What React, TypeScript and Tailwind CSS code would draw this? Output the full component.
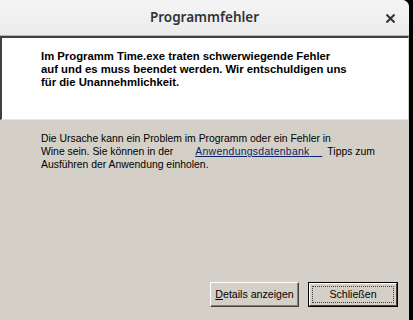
import React from "react";

export default function App() {
  const tahoma = { fontFamily: '"Liberation Sans", Arial, sans-serif' };
  return (
    <div className="w-[413px] h-[320px] bg-black overflow-hidden flex">
      <div className="w-[409px] h-[320px] flex flex-col bg-[#d4d0c8] rounded-tr-[7px] overflow-hidden">
        {/* Title bar */}
        <div className="h-[36px] shrink-0 relative flex items-center justify-center bg-gradient-to-b from-[#f4f4f4] to-[#ececec] border-b border-[#b8b6b2]">
          <span
            className="text-[13.5px] font-semibold text-[#2e3436] leading-none"
            style={{ fontFamily: '"Noto Sans", "Open Sans", sans-serif' }}
          >
            Programmfehler
          </span>
          <svg
            className="absolute right-[14px] top-[14px]"
            width="9"
            height="9"
            viewBox="0 0 9 9"
          >
            <path d="M1.2 1.2 L7.8 7.8 M7.8 1.2 L1.2 7.8" stroke="#2e3436" strokeWidth="2" strokeLinecap="square" />
          </svg>
        </div>

        {/* White message panel */}
        <div className="h-[84px] shrink-0 bg-white border-t-2 border-l-2 border-t-[#404040] border-l-[#404040] border-r border-b border-r-[#d4d0c8] border-b-[#e8e6e2] pl-[39px] pt-[12px]">
          <div className="text-[11.3px] font-bold leading-[13px] text-black" style={tahoma}>
            <div>Im Programm Time.exe traten schwerwiegende Fehler</div>
            <div>auf und es muss beendet werden. Wir entschuldigen uns</div>
            <div>für die Unannehmlichkeit.</div>
          </div>
        </div>

        {/* Gray body */}
        <div className="flex-1 flex flex-col pl-[41px] pt-[12px]">
          <div className="text-[10.4px] leading-[13px] text-black" style={tahoma}>
            <div>Die Ursache kann ein Problem im Programm oder ein Fehler in</div>
            <div className="flex whitespace-pre">
              <span>Wine sein. Sie können in der</span>
              <span className="ml-[22px] text-[#0a246a] underline tracking-[0.3px]">Anwendungsdatenbank{"\u00a0\u00a0\u00a0\u00a0"}</span>
              <span className="ml-[5px]">Tipps zum</span>
            </div>
            <div>Ausführen der Anwendung einholen.</div>
          </div>
        </div>

        {/* Buttons */}
        <div className="h-[38px] shrink-0 flex justify-end items-start gap-[9px] pr-[11px]">
          <button
            className="w-[89px] h-[25px] bg-[#d4d0c8] border border-t-white border-l-white border-r-[#404040] border-b-[#404040] shadow-[inset_-1px_-1px_0_#808080] text-[10.6px] text-black flex items-center justify-center"
            style={tahoma}
          >
            <span><span className="underline">D</span>etails anzeigen</span>
          </button>
          <button
            className="w-[90px] h-[25px] bg-[#d4d0c8] border border-black p-0 flex"
            style={tahoma}
          >
            <div className="flex-1 flex border border-t-white border-l-white border-r-[#404040] border-b-[#404040]">
              <div className="flex-1 flex m-[2px] border border-dotted border-[#404040] items-center justify-center text-[10.6px] text-black">
                Schließen
              </div>
            </div>
          </button>
        </div>
      </div>
    </div>
  );
}
